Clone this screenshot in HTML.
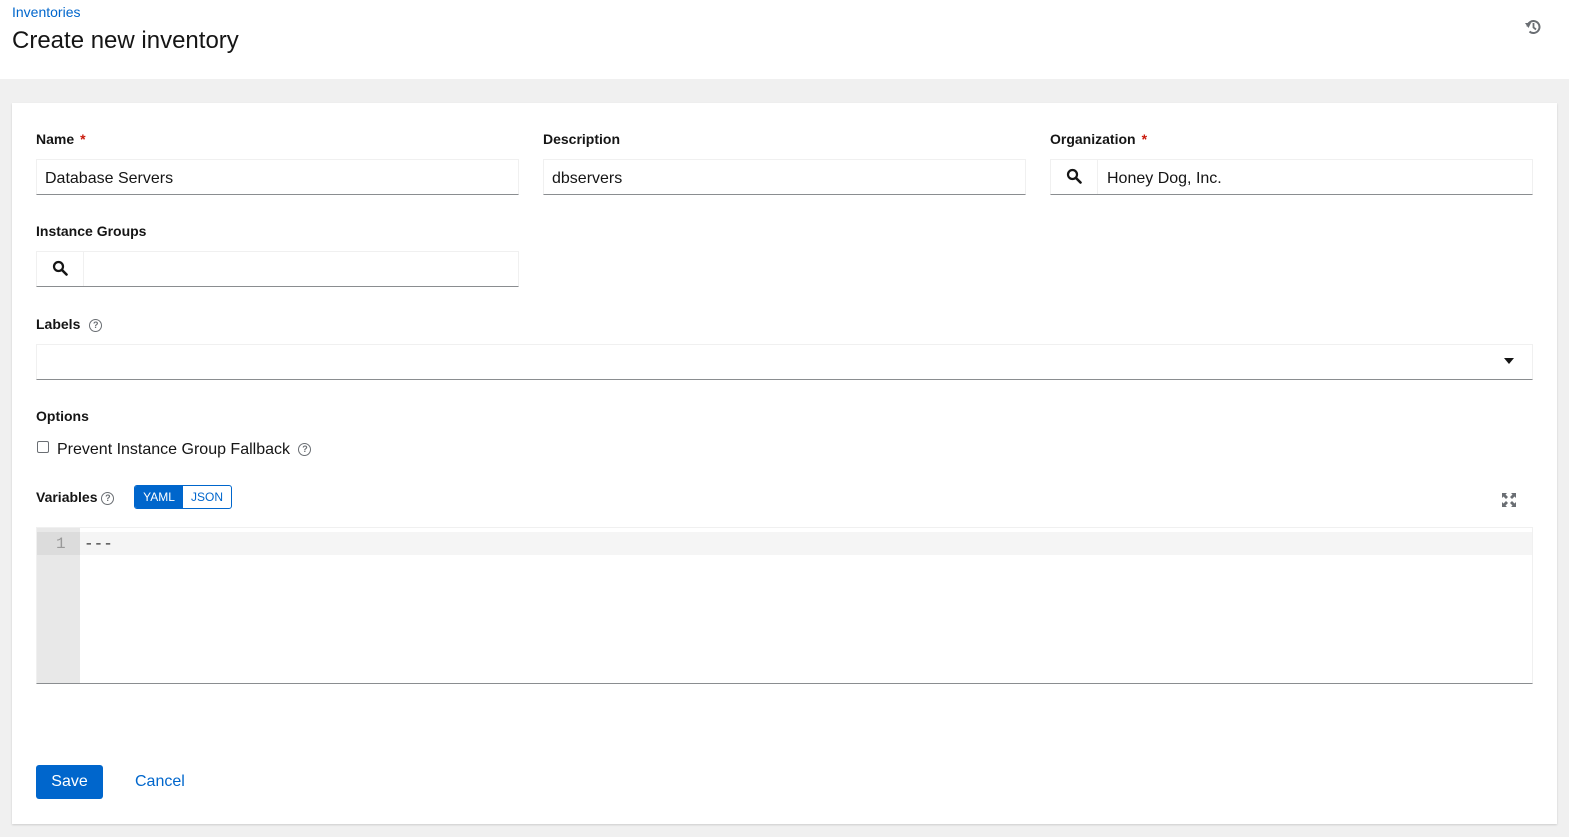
<!DOCTYPE html>
<html><head><style>
*{box-sizing:border-box;margin:0;padding:0}
body{width:1569px;height:837px;background:#f0f0f0;font-family:"Liberation Sans",sans-serif;color:#151515;position:relative;overflow:hidden}
.a{position:absolute}
.hdr{left:0;top:0;width:1569px;height:79px;background:#fff}
.card{left:12px;top:103px;width:1545px;height:721px;background:#fff;box-shadow:0 1px 2px rgba(0,0,0,.15)}
.lbl{font-size:14px;font-weight:bold;color:#151515}
.req{color:#c9190b;margin-left:6px}
.inp{height:36px;border:1px solid #f0f0f0;border-bottom:1px solid #8a8d90;background:#fff;font-size:16px;padding:10px 8px 8px;color:#151515}
.q{display:inline-block;width:13px;height:13px;border:1.3px solid #6a6e73;border-radius:50%;font-size:9px;text-align:center;line-height:11px;color:#6a6e73;font-weight:bold;vertical-align:middle}
</style></head><body>
<div class="a hdr"></div>
<div class="a" style="left:12px;top:4px;font-size:14px;color:#0066cc">Inventories</div>
<div class="a" style="left:12px;top:27px;font-size:24px;color:#151515">Create new inventory</div>
<svg class="a" style="left:1524px;top:18px" width="18" height="18" viewBox="0 0 18 18"><path d="M3.5 8.5A6 6 0 1 1 5.5 13.5" fill="none" stroke="#6a6e73" stroke-width="2"/><path d="M1 5l3.5 5L7 5z" fill="#6a6e73"/><path d="M9.5 5v4.5l2.5 2" fill="none" stroke="#6a6e73" stroke-width="1.8"/></svg>
<div class="a card"></div>

<div class="a lbl" style="left:36px;top:131px">Name<span class="req">*</span></div>
<div class="a inp" style="left:36px;top:159px;width:483px">Database Servers</div>
<div class="a lbl" style="left:543px;top:131px">Description</div>
<div class="a inp" style="left:543px;top:159px;width:483px">dbservers</div>
<div class="a lbl" style="left:1050px;top:131px">Organization<span class="req">*</span></div>
<div class="a inp" style="left:1050px;top:159px;width:483px;padding-left:56px">Honey Dog, Inc.</div>
<div class="a" style="left:1097px;top:160px;width:1px;height:34px;background:#f0f0f0"></div>
<svg class="a" style="left:1066px;top:168px" width="16" height="16" viewBox="0 0 16 16"><circle cx="6.5" cy="6.5" r="4.5" fill="none" stroke="#151515" stroke-width="2.2"/><path d="M10 10l4.5 4.5" stroke="#151515" stroke-width="2.6" stroke-linecap="round"/></svg>

<div class="a lbl" style="left:36px;top:223px">Instance Groups</div>
<div class="a inp" style="left:36px;top:251px;width:483px"></div>
<div class="a" style="left:83px;top:252px;width:1px;height:34px;background:#f0f0f0"></div>
<svg class="a" style="left:52px;top:260px" width="16" height="16" viewBox="0 0 16 16"><circle cx="6.5" cy="6.5" r="4.5" fill="none" stroke="#151515" stroke-width="2.2"/><path d="M10 10l4.5 4.5" stroke="#151515" stroke-width="2.6" stroke-linecap="round"/></svg>

<div class="a lbl" style="left:36px;top:316px">Labels <span class="q" style="margin-left:5px">?</span></div>
<div class="a inp" style="left:36px;top:344px;width:1497px"></div>
<svg class="a" style="left:1504px;top:358px" width="10" height="6"><path d="M0 0h10L5 6z" fill="#151515"/></svg>

<div class="a lbl" style="left:36px;top:408px">Options</div>
<div class="a" style="left:37px;top:441px;width:12px;height:12px;border:1px solid #6a6e73;border-radius:2px"></div>
<div class="a" style="left:57px;top:441px;font-size:16px">Prevent Instance Group Fallback <span class="q" style="margin-left:4px">?</span></div>

<div class="a lbl" style="left:36px;top:489px">Variables <span class="q">?</span></div>
<div class="a" style="left:134px;top:485px;width:98px;height:24px;border:1px solid #0066cc;border-radius:3px;font-size:12px;overflow:hidden;display:flex">
<div style="width:49px;background:#0066cc;color:#fff;text-align:center;line-height:22px">YAML</div>
<div style="width:49px;color:#0066cc;text-align:center;line-height:22px">JSON</div></div>
<svg class="a" style="left:1502px;top:493px" width="14" height="14" viewBox="0 0 14 14" fill="#6a6e73"><path d="M0 0h5L3.5 1.5 6 4 4 6 1.5 3.5 0 5zM14 0v5l-1.5-1.5L10 6 8 4l2.5-2.5L9 0zM0 14V9l1.5 1.5L4 8l2 2-2.5 2.5L5 14zM14 14H9l1.5-1.5L8 10l2-2 2.5 2.5L14 9z"/></svg>

<div class="a" style="left:36px;top:527px;width:1497px;height:157px;border:1px solid #f0f0f0;border-bottom:1px solid #8a8d90;background:#fff"></div>
<div class="a" style="left:37px;top:528px;width:43px;height:155px;background:#e8e8e8"></div>
<div class="a" style="left:80px;top:532px;width:1452px;height:23px;background:#f5f5f5"></div>
<div class="a" style="left:37px;top:532px;width:43px;height:23px;background:#dcdcdc"></div>
<div class="a" style="left:56px;top:535px;font-family:'Liberation Mono',monospace;font-size:16px;color:#999">1</div>
<div class="a" style="left:84px;top:535px;font-family:'Liberation Mono',monospace;font-size:16px;color:#333">---</div>

<div class="a" style="left:36px;top:765px;width:67px;height:34px;background:#0066cc;border-radius:3px;color:#fff;font-size:16px;text-align:center;line-height:34px">Save</div>
<div class="a" style="left:135px;top:773px;font-size:16px;color:#0066cc">Cancel</div>
</body></html>
